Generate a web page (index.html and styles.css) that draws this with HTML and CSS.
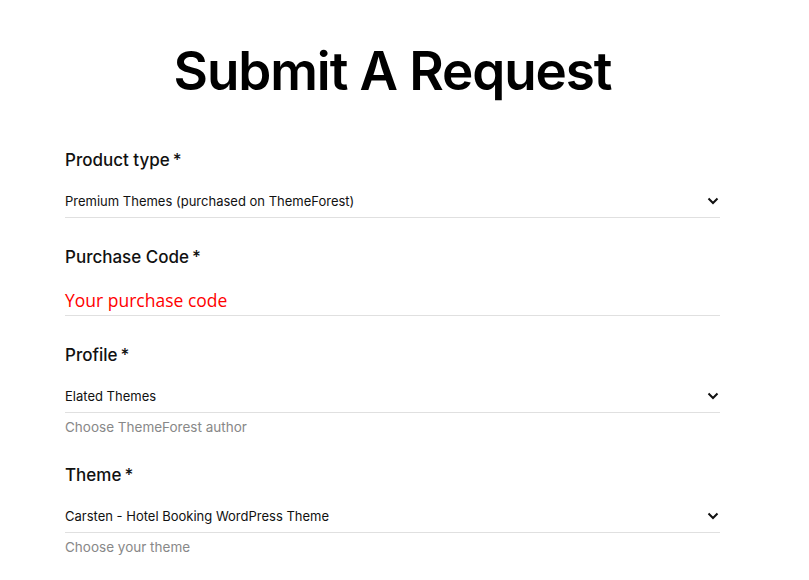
FILE: index.html
```html
<!DOCTYPE html>
<html lang="en">
<head>
    <meta charset="UTF-8">
    <meta name="viewport" content="width=device-width, initial-scale=1.0">
    <title>Submit A Request</title>
    <link rel="stylesheet" href="styles.css">
</head>
<body>
    <div class="container">
        <h1>Submit A Request</h1>

        <!-- Request form -->
        <form class="request-form">
            <div class="field">
                <label class="field-label">Product type<span class="req">*</span></label>
                <div class="select-row">
                    <span class="select-value">Premium Themes (purchased on ThemeForest)</span>
                    <svg class="chevron" width="12" height="8" viewBox="0 0 12 8"><path d="M1.5 1.5 L6 6 L10.5 1.5" fill="none" stroke="#111" stroke-width="2"/></svg>
                </div>
            </div>

            <div class="field">
                <label class="field-label">Purchase Code<span class="req">*</span></label>
                <div class="input-row">
                    <span class="placeholder">Your purchase code</span>
                </div>
            </div>

            <div class="field">
                <label class="field-label">Profile<span class="req">*</span></label>
                <div class="select-row">
                    <span class="select-value">Elated Themes</span>
                    <svg class="chevron" width="12" height="8" viewBox="0 0 12 8"><path d="M1.5 1.5 L6 6 L10.5 1.5" fill="none" stroke="#111" stroke-width="2"/></svg>
                </div>
                <div class="help">Choose ThemeForest author</div>
            </div>

            <div class="field">
                <label class="field-label">Theme<span class="req">*</span></label>
                <div class="select-row">
                    <span class="select-value">Carsten - Hotel Booking WordPress Theme</span>
                    <svg class="chevron" width="12" height="8" viewBox="0 0 12 8"><path d="M1.5 1.5 L6 6 L10.5 1.5" fill="none" stroke="#111" stroke-width="2"/></svg>
                </div>
                <div class="help">Choose your theme</div>
            </div>
        </form>
    </div>
</body>
</html>
```

FILE: styles.css
```css
body {
    font-family: Inter, "Noto Sans", sans-serif;
    background-color: #fff;
    color: #111;
    margin: 0;
}
.container {
    width: 655px;
    margin-left: 65px;
}
h1 {
    margin: 0;
    padding-top: 39px;
    height: 148px;
    box-sizing: border-box;
    text-align: center;
    font-size: 53px;
    line-height: 64px;
    font-weight: 600;
    letter-spacing: -1.1px;
    color: #000;
}
.request-form {
    display: flex;
    flex-direction: column;
    gap: 27px;
}
.field {
    display: flex;
    flex-direction: column;
}
.field-label {
    font-size: 17px;
    line-height: 24px;
    font-weight: 500;
}
.req {
    margin-left: 3px;
}
.select-row {
    display: flex;
    justify-content: space-between;
    align-items: center;
    height: 32px;
    margin-top: 13px;
    border-bottom: 1px solid #e0e0e0;
    font-size: 13px;
}
.chevron {
    margin-right: 1px;
}
.input-row {
    display: flex;
    align-items: center;
    height: 30px;
    margin-top: 16px;
    border-bottom: 1px solid #e0e0e0;
}
.placeholder {
    font-family: "Open Sans", sans-serif;
    font-size: 17.5px;
    color: #f00;
}
.help {
    margin-top: 4px;
    font-size: 13.5px;
    line-height: 20px;
    color: #888;
}
.field:has(.help) + .field {
    margin-top: -1px;
}
```
